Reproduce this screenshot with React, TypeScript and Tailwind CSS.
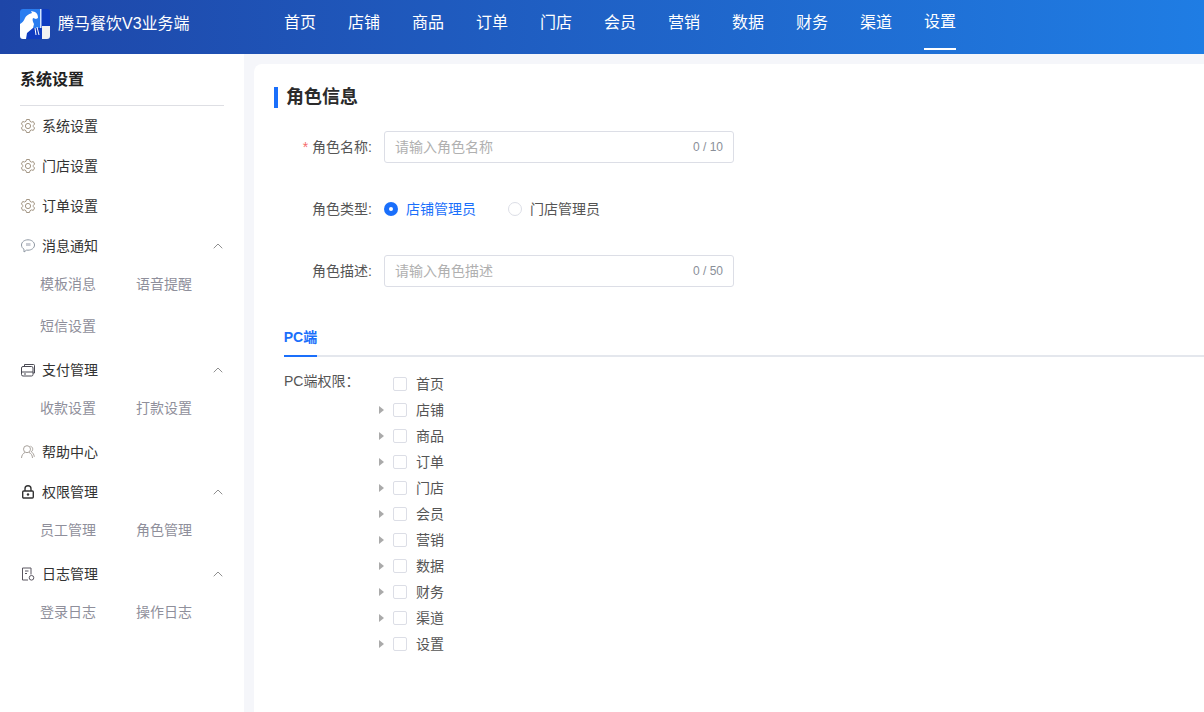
import { ChevronUp } from 'lucide-react'
import type { ReactNode } from 'react'

const navItems = ['首页', '店铺', '商品', '订单', '门店', '会员', '营销', '数据', '财务', '渠道', '设置']
const treeItems = ['店铺', '商品', '订单', '门店', '会员', '营销', '数据', '财务', '渠道', '设置']

function Logo() {
  return (
    <svg width="30" height="30" viewBox="0 0 30 30" className="shrink-0">
      <rect width="30" height="30" rx="3" fill="#0f3cc0" />
      <path d="M0 3a3 3 0 0 1 3-3h17v19H0z" fill="#2a7df0" />
      <rect x="20" y="0" width="1.500" height="19" fill="#cfe0ff" />
      <path d="M22 17h8v10a3 3 0 0 1-3 3h-5z" fill="#f2f2f2" />
      <path d="M0 27V15c2-1 4-3 5-6 1-2 3-4 7-5l-1-2 4 1c2 1 3 3 3 6l-2 1-3-1c-1 2 0 4 1 6l-1 4-6 5-1 6H3a3 3 0 0 1-3-3z" fill="#fff" />
      <path d="M15 19l1 7M17 18l2 8" stroke="#fff" strokeWidth="1" fill="none" />
    </svg>
  )
}

function GearIcon() {
  return (
    <svg width="16" height="16" viewBox="0 0 16 16" fill="none" stroke="#a39684" strokeWidth="1">
      <path d="M6.500 1.500h3l.5 1.800 1.500.8 1.800-.5 1.300 2.400-1.300 1.400v1.200l1.300 1.400-1.300 2.400-1.800-.5-1.500.8-.5 1.800h-3l-.5-1.800-1.500-.8-1.800.5L1.400 9.900l1.300-1.400V7.300L1.400 5.900l1.300-2.400 1.800.5 1.500-.8z" />
      <circle cx="8" cy="8" r="2.600" />
    </svg>
  )
}

function ChatIcon() {
  return (
    <svg width="16" height="16" viewBox="0 0 16 16" fill="none" stroke="#8f98a3" strokeWidth="1">
      <path d="M8 1.800c3.600 0 6.500 2.300 6.500 5.200S11.600 12.200 8 12.200c-.5 0-1 0-1.400-.1L4 14v-2.800C2.400 10.300 1.500 8.800 1.500 7 1.500 4.100 4.400 1.800 8 1.800z" />
      <rect x="6" y="5" width="4.500" height="3" fill="#c9ccd3" stroke="none" />
    </svg>
  )
}

function CardIcon() {
  return (
    <svg width="16" height="16" viewBox="0 0 16 16" fill="none" stroke="#4a4a54" strokeWidth="1">
      <path d="M4.500 4.500V2.500h9a1 1 0 0 1 1 1v7.500h-1.500" />
      <rect x="1.500" y="4.500" width="11.500" height="9.500" rx="1.500" />
      <path d="M1.500 10h11.500M4 12h2" />
    </svg>
  )
}

function UserIcon() {
  return (
    <svg width="16" height="16" viewBox="0 0 16 16" fill="none" stroke="#a8a29c" strokeWidth="1">
      <circle cx="7" cy="5.200" r="3.500" />
      <path d="M1.500 14c.2-2.800 1.600-4.800 3.500-5.500M9 8.500c2 .7 3.400 2.700 3.500 5.500M10.500 2.200c1.500.5 2.300 1.700 2.200 3.200-.1 1-.6 1.900-1.400 2.400 1.600.8 2.800 2.800 3 5" />
    </svg>
  )
}

function LockIcon() {
  return (
    <svg width="16" height="16" viewBox="0 0 16 16" fill="none" stroke="#333" strokeWidth="1.400">
      <path d="M5 7V4.800a3 3 0 0 1 6 0V7" />
      <rect x="2.700" y="7" width="10.600" height="7" rx="1" />
      <circle cx="8" cy="10.500" r="1.200" fill="#333" stroke="none" />
    </svg>
  )
}

function LogIcon() {
  return (
    <svg width="16" height="16" viewBox="0 0 16 16" fill="none" stroke="#5a5660" strokeWidth="1">
      <path d="M8 14H2.500V2h8.500v6.500" />
      <path d="M5 5h3.500M5 7.500h2" />
      <circle cx="11.500" cy="11.800" r="2.300" />
    </svg>
  )
}

function MenuRow({ icon, label, open }: { icon: ReactNode; label: string; open?: boolean }) {
  return (
    <div className="flex h-10 items-center pr-[18px] pl-[20px] text-[#333]">
      <span className="flex w-[22px] shrink-0 items-center">{icon}</span>
      <span className="flex-1 text-[14px]">{label}</span>
      {open && <ChevronUp size={16} strokeWidth={1.100} className="text-[#666]" />}
    </div>
  )
}

function SubMenu({ items }: { items: string[] }) {
  return (
    <div className="-mt-[3px] mb-[3px] grid grid-cols-[96px_96px] pl-10">
      {items.map((t) => (
        <div key={t} className="flex h-[42px] items-center text-[14px] text-[#8f8f9b]">
          {t}
        </div>
      ))}
    </div>
  )
}

function Sidebar() {
  return (
    <aside className="w-[244px] shrink-0 bg-white">
      <div className="mx-5 flex h-[52px] items-start border-b border-[#dedfe4] pt-[15px] text-[16px] leading-[22px] font-semibold text-[#222]">
        系统设置
      </div>
      <MenuRow icon={<GearIcon />} label="系统设置" />
      <MenuRow icon={<GearIcon />} label="门店设置" />
      <MenuRow icon={<GearIcon />} label="订单设置" />
      <MenuRow icon={<ChatIcon />} label="消息通知" open />
      <SubMenu items={['模板消息', '语音提醒', '短信设置']} />
      <MenuRow icon={<CardIcon />} label="支付管理" open />
      <SubMenu items={['收款设置', '打款设置']} />
      <MenuRow icon={<UserIcon />} label="帮助中心" />
      <MenuRow icon={<LockIcon />} label="权限管理" open />
      <SubMenu items={['员工管理', '角色管理']} />
      <MenuRow icon={<LogIcon />} label="日志管理" open />
      <SubMenu items={['登录日志', '操作日志']} />
    </aside>
  )
}

function TextField({ label, placeholder, count, required }: { label: string; placeholder: string; count: string; required?: boolean }) {
  return (
    <div className="flex h-8 items-center">
      <label className="w-[118px] shrink-0 text-right text-[14px] text-[#555]">
        {required && <span className="mr-1 text-[#f56c6c]">*</span>}
        {label}:
      </label>
      <div className="ml-3 flex h-8 w-[350px] items-center justify-between rounded-[3px] border border-[#dcdee6] px-[10px]">
        <span className="text-[14px] text-[#b0b0b0]">{placeholder}</span>
        <span className="text-[12px] text-[#8a8f99]">{count}</span>
      </div>
    </div>
  )
}

function TreeRow({ label, arrow }: { label: string; arrow?: boolean }) {
  return (
    <div className="flex h-[26px] items-center">
      <span className="flex w-[14px] shrink-0 items-center justify-start">
        {arrow && <span className="h-0 w-0 border-y-[4px] border-l-[5px] border-y-transparent border-l-[#aaa]" />}
      </span>
      <span className="h-[14px] w-[14px] rounded-[2px] border border-[#dcdee6] bg-white" />
      <span className="ml-[9px] text-[14px] text-[#555]">{label}</span>
    </div>
  )
}

export default function App() {
  return (
    <div
      className="flex h-[712px] flex-col overflow-hidden bg-[#f5f6fa]"
      style={{ fontFamily: '"Liberation Sans", "Noto Sans CJK SC", sans-serif' }}
    >
      <header className="flex h-[54px] shrink-0 bg-gradient-to-r from-[#1e46a8] to-[#1f7de4] text-white">
        <div className="flex w-[284px] shrink-0 items-center gap-[8px] pb-[6px] pl-5">
          <Logo />
          <span className="text-[16px]">腾马餐饮V3业务端</span>
        </div>
        <nav className="flex gap-8">
          {navItems.map((t) => (
            <div
              key={t}
              className={`flex h-[50px] w-8 items-center justify-center pb-[5px] text-[16px] ${
                t === '设置' ? 'border-b-2 border-white' : ''
              }`}
            >
              {t}
            </div>
          ))}
        </nav>
      </header>

      <div className="flex min-h-0 flex-1">
        <Sidebar />
        <main className="mt-[10px] ml-[10px] min-w-0 flex-1 rounded-tl-lg bg-white">
          <div className="mt-[23px] ml-5 flex h-[21px] items-center border-l-4 border-[#1a6ffb] pl-2 text-[18px] font-bold text-[#2b2b2b]">
            角色信息
          </div>
          <div className="mt-[23px]">
            <TextField label="角色名称" placeholder="请输入角色名称" count="0 / 10" required />
          </div>
          <div className="mt-[30px] flex h-8 items-center">
            <label className="w-[118px] shrink-0 text-right text-[14px] text-[#555]">角色类型:</label>
            <div className="ml-3 flex items-center text-[14px]">
              <span className="flex h-[14px] w-[14px] items-center justify-center rounded-full bg-[#1a6ffb]">
                <span className="h-1 w-1 rounded-full bg-white" />
              </span>
              <span className="ml-2 text-[#1a6ffb]">店铺管理员</span>
              <span className="ml-[32px] h-[14px] w-[14px] rounded-full border border-[#dcdee6]" />
              <span className="ml-2 text-[#555]">门店管理员</span>
            </div>
          </div>
          <div className="mt-[30px]">
            <TextField label="角色描述" placeholder="请输入角色描述" count="0 / 50" />
          </div>

          <div className="mt-[32px] ml-[30px] border-b-2 border-[#e4e7ed]">
            <div className="-mb-[2px] flex h-[38px] w-[33px] items-center justify-center border-b-2 border-[#1a6ffb] text-[14px] font-bold whitespace-nowrap text-[#1a6ffb]">
              PC端
            </div>
          </div>

          <div className="mt-[14px] ml-[30px] flex">
            <div className="w-[95px] shrink-0 text-[14px] leading-5 text-[#555]">PC端权限：</div>
            <div>
              <TreeRow label="首页" />
              {treeItems.map((t) => (
                <TreeRow key={t} label={t} arrow />
              ))}
            </div>
          </div>
        </main>
      </div>
    </div>
  )
}
